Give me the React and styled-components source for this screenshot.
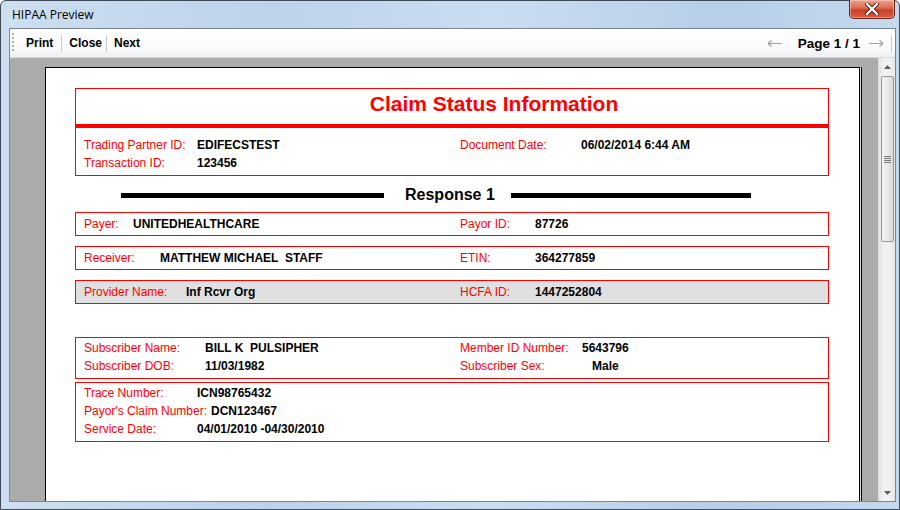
import React from "react"
import styled, { createGlobalStyle } from "styled-components"

const GlobalStyle = createGlobalStyle`
  html, body {
    margin: 0;
    padding: 0;
    overflow: hidden;
    background: #fff;
  }
  * {
    box-sizing: border-box;
  }
`

const Window = styled.div`
  width: 900px;
  height: 510px;
  display: flex;
  flex-direction: column;
  border: 1px solid #3d4a58;
  border-radius: 6px 6px 0 0;
  background: linear-gradient(90deg, #cddff0 0%, #bcd3ea 30%, #c9ddf0 55%, #b7cfe7 80%, #c3d9ee 100%);
  font-family: "Liberation Sans", Arial, sans-serif;
`

const TitleBar = styled.div`
  height: 27px;
  display: flex;
  align-items: flex-start;
  justify-content: space-between;
  padding-left: 11px;
`

const Title = styled.span`
  font-family: "Open Sans", "Liberation Sans", sans-serif;
  font-size: 12px;
  line-height: 28px;
  color: #000;
`

const CloseButton = styled.div`
  width: 46px;
  height: 19px;
  margin: -1px 4px 0 0;
  border: 1px solid #6b2418;
  border-top: none;
  border-radius: 0 0 5px 5px;
  background: linear-gradient(#eba592 0%, #da6a50 45%, #c8402a 55%, #d85a3f 100%);
  display: flex;
  align-items: center;
  justify-content: center;
  box-shadow: inset 0 0 0 1px rgba(255, 210, 200, 0.5);
`

const Client = styled.div`
  flex: 1;
  min-height: 0;
  margin: 0 3px 7px 8px;
  border: 1px solid #7b8796;
  background: #fff;
  display: flex;
  flex-direction: column;
`

const Toolbar = styled.div`
  height: 29px;
  flex-shrink: 0;
  display: flex;
  align-items: center;
  padding: 0 3px 0 2px;
  background: linear-gradient(#ffffff, #fbfbfc 60%, #eef0f2);
  border-bottom: 1px solid #d5d8dc;
`

const Grip = styled.div`
  width: 2px;
  height: 20px;
  margin-right: 4px;
  background: repeating-linear-gradient(#a9acb0 0 2px, transparent 2px 4px);
`

const ToolButton = styled.div`
  padding: ${(p) => p.$pad || "0 8px"};
  font-size: 12px;
  font-weight: bold;
  color: #000;
  line-height: 20px;
`

const ToolSep = styled.div`
  width: 1px;
  height: 17px;
  background: #c8cbcf;
`

const Spacer = styled.div`
  flex: 1;
`

const PageArrow = styled.svg`
  display: block;
  margin: ${(p) => p.$margin};
`

const PageLabel = styled.span`
  font-size: 13.5px;
  font-weight: bold;
  color: #000;
`

const Viewer = styled.div`
  flex: 1;
  min-height: 0;
  display: flex;
`

const Canvas = styled.div`
  flex: 1;
  display: flex;
  background: #ababab;
  padding: 9px 18px 0 35px;
  overflow: hidden;
`

const Page = styled.div`
  flex: 1;
  background: #fff;
  border: 1px solid #000;
  border-bottom: none;
  box-shadow: 1px 0 0 #d8d8d8, 2px 0 0 #000;
  padding: 20px 30px 0 29px;
  color: #000;
`

const Box = styled.div`
  border: 1px solid #ff0000;
  background: ${(p) => (p.$shaded ? "#e0e0e0" : "#fff")};
  margin-top: ${(p) => p.$top || 0}px;
`

const DocTitle = styled.div`
  height: 35px;
  line-height: 30px;
  text-align: center;
  font-size: 21px;
  font-weight: bold;
  color: #ff0000;
  padding-left: 84px;
`

const RedBar = styled.div`
  height: 4px;
  background: #ff0000;
`

const Rows = styled.div`
  padding: ${(p) => p.$pad || "1px 0 3px 8px"};
`

const Row = styled.div`
  display: grid;
  grid-template-columns: 376px 1fr;
  line-height: ${(p) => p.$lh || 18}px;
  height: ${(p) => p.$lh || 18}px;
`

const Field = styled.div`
  display: flex;
  white-space: pre;
`

const Label = styled.span`
  display: inline-block;
  width: ${(p) => p.$w}px;
  flex-shrink: 0;
  font-size: 12px;
  color: #ff0000;
`

const Value = styled.span`
  font-size: 12px;
  font-weight: bold;
  color: #000;
`

const Separator = styled.div`
  height: 20px;
  margin-top: 9px;
  display: flex;
  align-items: center;
  padding-left: 46px;
`

const SepBar = styled.div`
  width: ${(p) => p.$w}px;
  height: 5px;
  background: #000;
`

const SepText = styled.span`
  font-size: 16px;
  font-weight: bold;
  line-height: 20px;
  margin: 0 16px 0 21px;
`

const Scrollbar = styled.div`
  width: 17px;
  display: flex;
  flex-direction: column;
  align-items: center;
  background: linear-gradient(90deg, #e3e3e3, #f1f1f1 30%, #f1f1f1 70%, #e6e6e6);
  border-left: 1px solid #e0e0e0;
`

const ScrollArrow = styled.div`
  height: 17px;
  width: 100%;
  display: flex;
  align-items: center;
  justify-content: center;
`

const Thumb = styled.div`
  width: 13px;
  height: 166px;
  margin-top: 1px;
  border: 1px solid #979797;
  border-radius: 2px;
  background: linear-gradient(90deg, #f3f3f3, #e8e8e8 50%, #d9d9d9);
  display: flex;
  align-items: center;
  justify-content: center;
`

const Track = styled.div`
  flex: 1;
`

const GripLines = styled.div`
  width: 7px;
  height: 7px;
  background: repeating-linear-gradient(#777 0 1px, transparent 1px 2px);
`

const Triangle = ({ up }) => (
  <svg width="7" height="4" viewBox="0 0 7 4">
    <polygon points={up ? "0,4 3.5,0 7,4" : "0,0 3.5,4 7,0"} fill="#606060" />
  </svg>
)

const Arrow = ({ left, margin }) => (
  <PageArrow $margin={margin} width="16" height="7" viewBox="0 0 16 7">
    <g stroke="#a3a3a3" strokeWidth="1.2" fill="none">
      {left ? (
        <path d="M1 3.5 H15 M1 3.5 L4.5 0.5 M1 3.5 L4.5 6.5" />
      ) : (
        <path d="M1 3.5 H15 M15 3.5 L11.5 0.5 M15 3.5 L11.5 6.5" />
      )}
    </g>
  </PageArrow>
)

const Item = ({ label, w, value }) => (
  <Field>
    <Label $w={w}>{label}</Label>
    <Value>{value}</Value>
  </Field>
)

export default function App() {
  return (
    <>
      <GlobalStyle />
      <Window>
        <TitleBar>
          <Title>HIPAA Preview</Title>
          <CloseButton>
            <svg width="14" height="12" viewBox="0 0 14 12">
              <path
                d="M2 1 L12 11 M12 1 L2 11"
                stroke="#5a1a10"
                strokeWidth="4.2"
                strokeLinecap="round"
              />
              <path
                d="M2 1 L12 11 M12 1 L2 11"
                stroke="#fff"
                strokeWidth="2.4"
                strokeLinecap="round"
              />
            </svg>
          </CloseButton>
        </TitleBar>
        <Client>
          <Toolbar>
            <Grip />
            <ToolButton>Print</ToolButton>
            <ToolSep />
            <ToolButton $pad="0 4px 0 7px">Close</ToolButton>
            <ToolSep />
            <ToolButton $pad="0 8px 0 7px">Next</ToolButton>
            <Spacer />
            <Arrow left margin="0 15px 0 0" />
            <PageLabel>Page 1 / 1</PageLabel>
            <Arrow margin="0 7px 0 8px" />
            <ToolSep />
          </Toolbar>
          <Viewer>
            <Canvas>
              <Page>
                <Box>
                  <DocTitle>Claim Status Information</DocTitle>
                  <RedBar />
                  <Rows $pad="8px 0 3px 8px">
                    <Row>
                      <Item label="Trading Partner ID:" w={113} value="EDIFECSTEST" />
                      <Item label="Document Date:" w={121} value="06/02/2014 6:44 AM" />
                    </Row>
                    <Row>
                      <Item label="Transaction ID:" w={113} value="123456" />
                    </Row>
                  </Rows>
                </Box>

                <Separator>
                  <SepBar $w={263} />
                  <SepText>Response 1</SepText>
                  <SepBar $w={240} />
                </Separator>

                <Box $top={7}>
                  <Rows $pad="1px 0 0 8px">
                    <Row $lh={21}>
                      <Item label="Payer:" w={49} value="UNITEDHEALTHCARE" />
                      <Item label="Payor ID:" w={75} value="87726" />
                    </Row>
                  </Rows>
                </Box>
                <Box $top={10}>
                  <Rows $pad="1px 0 0 8px">
                    <Row $lh={21}>
                      <Item label="Receiver:" w={76} value="MATTHEW MICHAEL  STAFF" />
                      <Item label="ETIN:" w={75} value="364277859" />
                    </Row>
                  </Rows>
                </Box>
                <Box $top={10} $shaded>
                  <Rows $pad="1px 0 0 8px">
                    <Row $lh={21}>
                      <Item label="Provider Name:" w={102} value="Inf Rcvr Org" />
                      <Item label="HCFA ID:" w={75} value="1447252804" />
                    </Row>
                  </Rows>
                </Box>

                <Box $top={33}>
                  <Rows>
                    <Row>
                      <Item label="Subscriber Name:" w={121} value="BILL K  PULSIPHER" />
                      <Item label="Member ID Number:" w={122} value="5643796" />
                    </Row>
                    <Row>
                      <Item label="Subscriber DOB:" w={121} value="11/03/1982" />
                      <Item label="Subscriber Sex:" w={132} value="Male" />
                    </Row>
                  </Rows>
                </Box>
                <Box $top={3}>
                  <Rows>
                    <Row>
                      <Item label="Trace Number:" w={113} value="ICN98765432" />
                    </Row>
                    <Row>
                      <Item label="Payor's Claim Number:" w={127} value="DCN123467" />
                    </Row>
                    <Row>
                      <Item label="Service Date:" w={113} value="04/01/2010 -04/30/2010" />
                    </Row>
                  </Rows>
                </Box>
              </Page>
            </Canvas>
            <Scrollbar>
              <ScrollArrow>
                <Triangle up />
              </ScrollArrow>
              <Thumb>
                <GripLines />
              </Thumb>
              <Track />
              <ScrollArrow>
                <Triangle />
              </ScrollArrow>
            </Scrollbar>
          </Viewer>
        </Client>
      </Window>
    </>
  )
}
